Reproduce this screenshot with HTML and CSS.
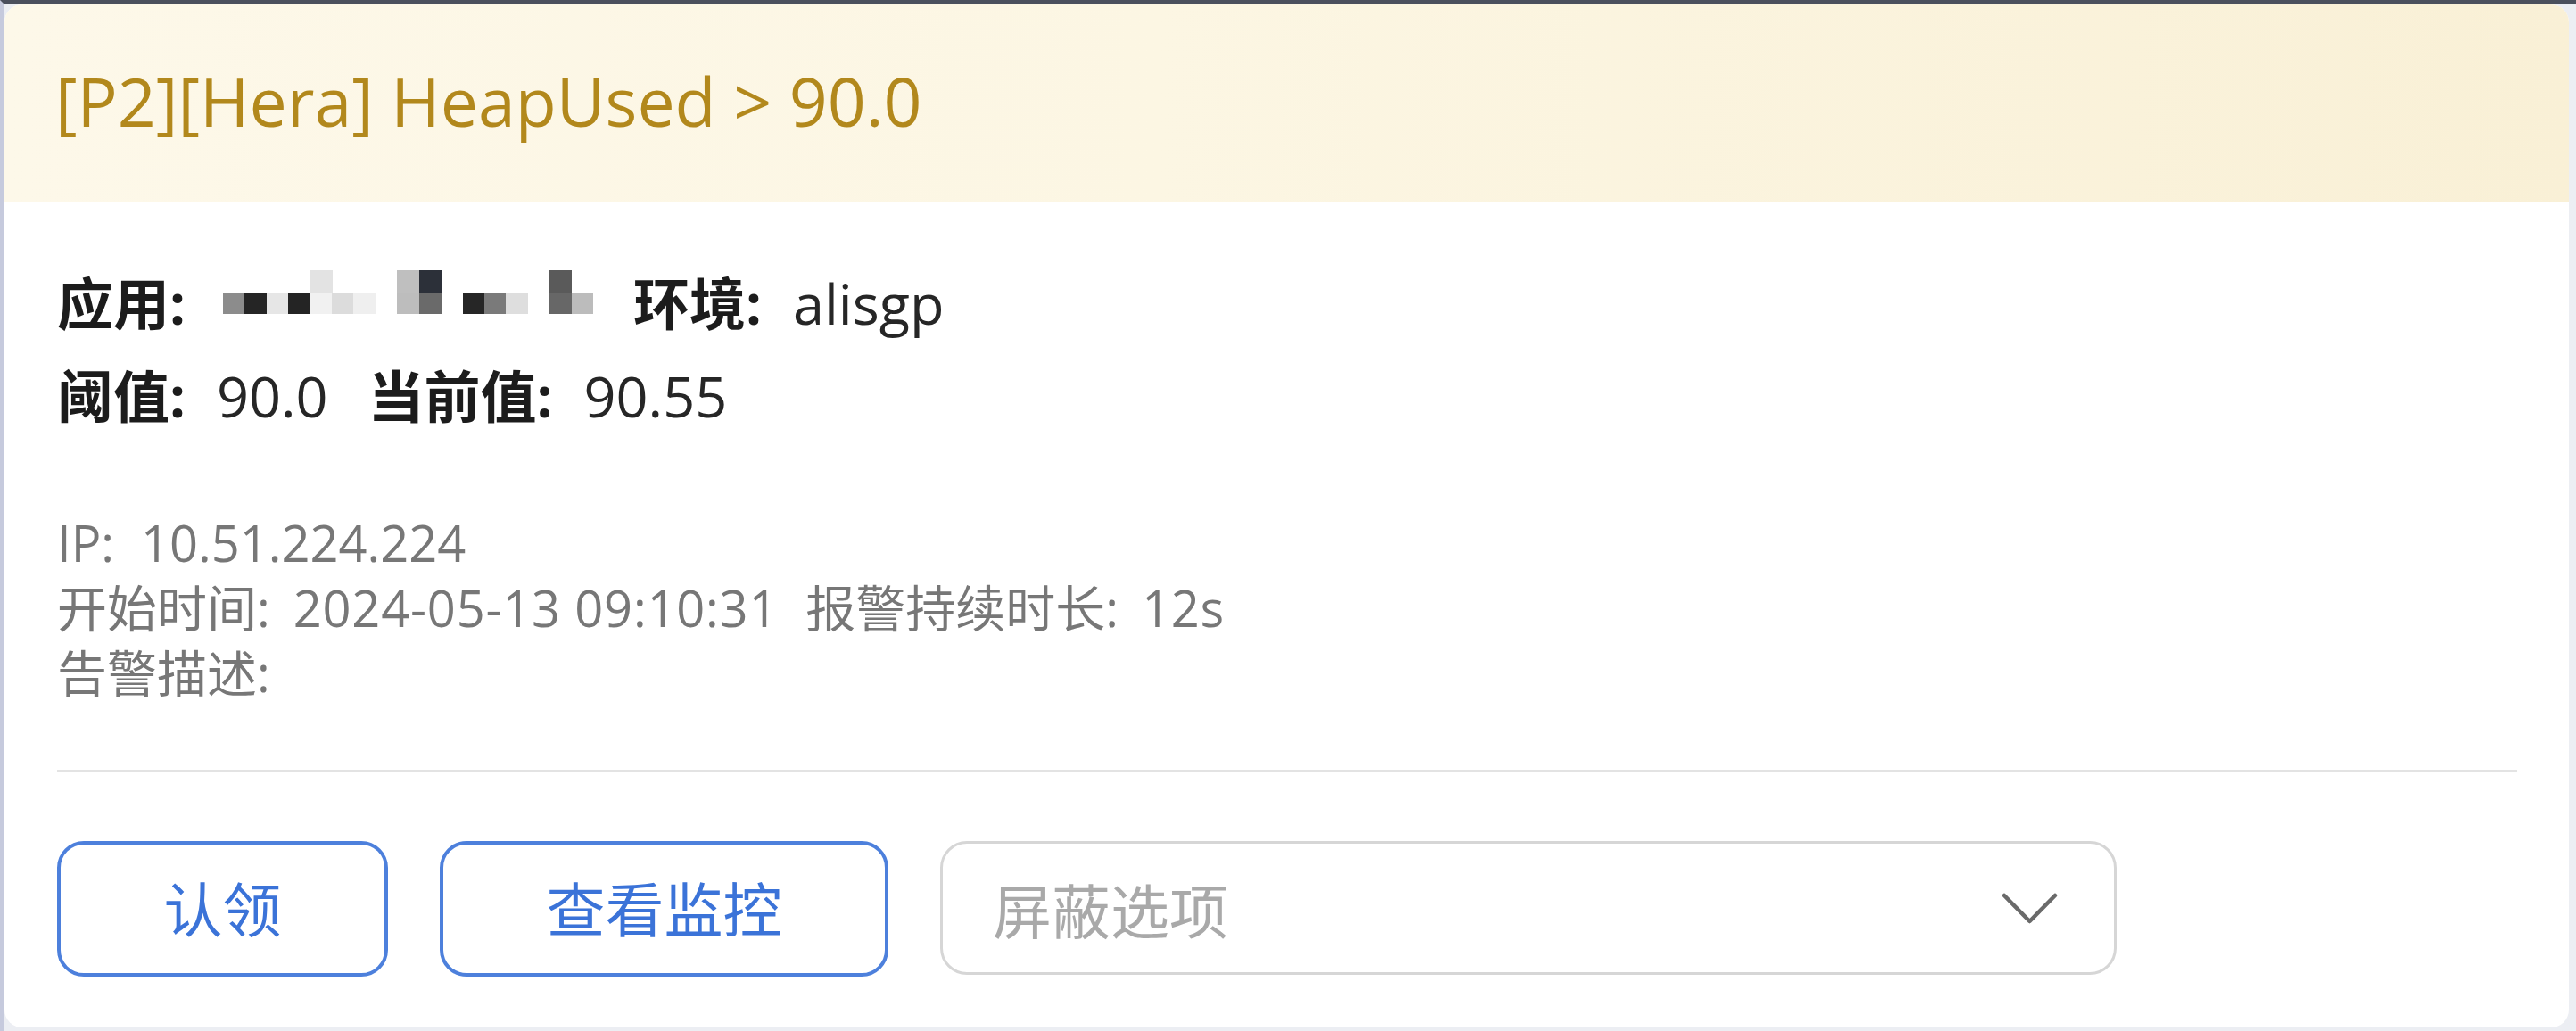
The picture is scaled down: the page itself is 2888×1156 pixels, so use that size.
FILE: index.html
```html
<!DOCTYPE html>
<html lang="zh-CN">
<head>
<meta charset="utf-8">
<title>Alert</title>
<link rel="stylesheet" href="styles.css">
</head>
<body>
<div class="frame">
  <div class="card">
    <div class="head"><h1 class="title">[P2][Hera] HeapUsed &gt; 90.0</h1></div>
    <div class="body">
      <div class="facts">
        <div class="row"><span class="pair"><b class="k">应用:</b><svg class="mask" viewBox="0 0 17 2" preserveAspectRatio="none"><rect x="4" y="0" width="1.02" height="1.02" fill="#e3e3e3"/><rect x="8" y="0" width="1.02" height="1.02" fill="#bfbfbf"/><rect x="9" y="0" width="1.02" height="1.02" fill="#2c3039"/><rect x="15" y="0" width="1.02" height="1.02" fill="#5a5a5a"/><rect x="0" y="1" width="1.02" height="1" fill="#8c8c8c"/><rect x="1" y="1" width="1.02" height="1" fill="#252525"/><rect x="2" y="1" width="1.02" height="1" fill="#e6e6e6"/><rect x="3" y="1" width="1.02" height="1" fill="#242424"/><rect x="4" y="1" width="1.02" height="1" fill="#f1f1f1"/><rect x="5" y="1" width="1.02" height="1" fill="#dcdcdc"/><rect x="6" y="1" width="1.02" height="1" fill="#efefef"/><rect x="8" y="1" width="1.02" height="1" fill="#bdbdbd"/><rect x="9" y="1" width="1.02" height="1" fill="#6a6a6a"/><rect x="11" y="1" width="1.02" height="1" fill="#262626"/><rect x="12" y="1" width="1.02" height="1" fill="#7a7a7a"/><rect x="13" y="1" width="1.02" height="1" fill="#dedede"/><rect x="15" y="1" width="1.02" height="1" fill="#676767"/><rect x="16" y="1" width="1" height="1" fill="#bcbcbc"/></svg></span><span class="pair"><b class="k">环境:</b><span class="v">alisgp</span></span></div>
        <div class="row"><span class="pair"><b class="k">阈值:</b><span class="v">90.0</span></span><span class="pair"><b class="k">当前值:</b><span class="v">90.55</span></span></div>
      </div>
      <div class="meta">
        <div class="line"><span class="mk">IP:</span><span class="mv mv-ip">10.51.224.224</span></div>
        <div class="line"><span class="mpair"><span class="mk">开始时间:</span><span class="mv">2024-05-13 09:10:31</span></span><span class="mpair"><span class="mk">报警持续时长:</span><span class="mv">12s</span></span></div>
        <div class="line"><span class="mk">告警描述:</span></div>
      </div>
      <div class="divider"></div>
      <div class="actions">
        <button class="btn btn-claim" type="button">认领</button>
        <button class="btn btn-view" type="button">查看监控</button>
        <div class="select">
          <span class="placeholder">屏蔽选项</span>
          <svg class="chev" viewBox="0 0 63 35"><polyline points="3,3 31.5,32 60,3" fill="none" stroke="#6a6a6a" stroke-width="4.5" stroke-linecap="round" stroke-linejoin="round"/></svg>
        </div>
      </div>
    </div>
  </div>
</div>
</body>
</html>
```

FILE: styles.css
```css
* { box-sizing: border-box; }

html, body {
  margin: 0;
  padding: 0;
}

body {
  width: 2888px;
  height: 1156px;
  overflow: hidden;
  font-family: "Open Sans", "Noto Sans CJK SC", sans-serif;
}

.frame {
  width: 2888px;
  height: 1156px;
  border-top: 5px solid #4b505d;
  border-left: 5px solid #c6cadd;
  background: #eceef3;
  padding: 0 8px 4px 0;
}

.card {
  width: 2875px;
  height: 1147px;
  background: #ffffff;
  border-radius: 20px;
  overflow: hidden;
}

.head {
  height: 222px;
  padding: 70px 0 0 57px;
  background: linear-gradient(90deg, #fdf8e9 0%, #fcf6e3 45%, #f9f0d6 100%);
}

.title {
  margin: 0;
  font-size: 75.2px;
  line-height: 76px;
  font-weight: 400;
  color: #b2881c;
  white-space: nowrap;
}

.body {
  padding: 61px 58px 57px 59px;
}

.facts {
  font-size: 63px;
  line-height: 104px;
  color: #262626;
}

.row {
  height: 104px;
  white-space: nowrap;
}

.pair + .pair {
  margin-left: 45px;
}

.k {
  font-weight: 700;
  color: #1c1c1c;
}

.v {
  margin-left: 35px;
}

.mask {
  width: 415px;
  height: 49px;
  margin-left: 42px;
  vertical-align: 12px;
  shape-rendering: crispEdges;
}

.meta {
  margin-top: 76px;
  font-size: 56px;
  line-height: 73px;
  color: #777777;
}

.line {
  height: 73px;
  white-space: nowrap;
}

.mv {
  margin-left: 26px;
  letter-spacing: 0.8px;
}

.mv-ip {
  margin-left: 30px;
  letter-spacing: 0;
}

.mpair + .mpair {
  margin-left: 31px;
}

.divider {
  margin-top: 72px;
  height: 3px;
  background: #e3e3e3;
}

.actions {
  margin-top: 77px;
  display: flex;
  align-items: flex-start;
  gap: 58px;
}

.btn {
  height: 152px;
  border: 4px solid #4d80dc;
  border-radius: 30px;
  background: #ffffff;
  color: #3b73d8;
  font-family: "Open Sans", "Noto Sans CJK SC", sans-serif;
  font-size: 66px;
  line-height: 1;
  padding: 0;
}

.btn-claim { width: 371px; }
.btn-view { width: 503px; }

.select {
  width: 1319px;
  height: 150px;
  border: 3px solid #d6d6d6;
  border-radius: 30px;
  display: flex;
  align-items: center;
  justify-content: space-between;
  padding: 0 63px 0 56px;
}

.placeholder {
  font-size: 66px;
  color: #a9a9a9;
}

.chev {
  width: 63px;
  height: 35px;
}
```
